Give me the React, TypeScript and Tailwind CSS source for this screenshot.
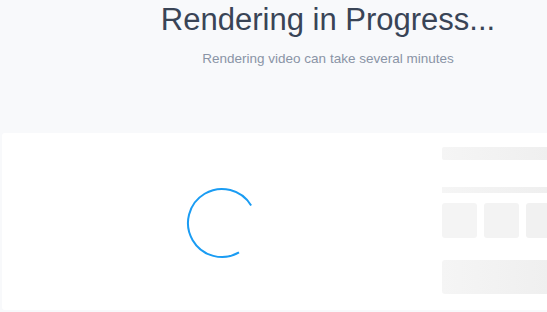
import React from "react";

function Spinner() {
  return (
    <svg width="72" height="72" viewBox="0 0 72 72" fill="none">
      <path
        d="M65.14 18.49 A34 34 0 1 0 53 65.44"
        stroke="#1a9cf3"
        strokeWidth="2"
        strokeLinecap="butt"
      />
    </svg>
  );
}

export default function App() {
  const sk = "bg-gradient-to-r from-[#f5f5f5] to-[#ececec]";
  return (
    <div
      className="w-[547px] h-[312px] overflow-hidden bg-[#f8f9fb]"
      style={{ fontFamily: '"Liberation Sans", Arial, sans-serif' }}
    >
      <div className="w-[656px] pt-[4px] text-center">
        <h1 className="text-[31px] leading-[31px] text-[#394456] font-normal">
          Rendering in Progress...
        </h1>
        <p className="mt-[16px] text-[13.5px] leading-[16px] text-[#8a94a6]">
          Rendering video can take several minutes
        </p>
      </div>
      <div className="ml-[2px] mt-[66px] w-[700px] h-[177px] bg-white rounded-[3px] flex">
        <div className="w-[440px] flex items-center justify-center pt-[3px]">
          <Spinner />
        </div>
        <div className="w-[160px] pt-[14px] flex flex-col">
          <div className={`h-[13px] rounded-[2px] ${sk}`} />
          <div className={`mt-[27px] h-[6px] ${sk}`} />
          <div className="mt-[10px] grid grid-cols-4 gap-[7px]">
            <div className="h-[35px] rounded-[3px] bg-[#f4f4f4]" />
            <div className="h-[35px] rounded-[3px] bg-[#f3f3f3]" />
            <div className="h-[35px] rounded-[3px] bg-[#f1f1f1]" />
            <div className="h-[35px] rounded-[3px] bg-[#efefef]" />
          </div>
          <div className={`mt-[22px] h-[34px] rounded-[3px] ${sk}`} />
        </div>
      </div>
    </div>
  );
}
